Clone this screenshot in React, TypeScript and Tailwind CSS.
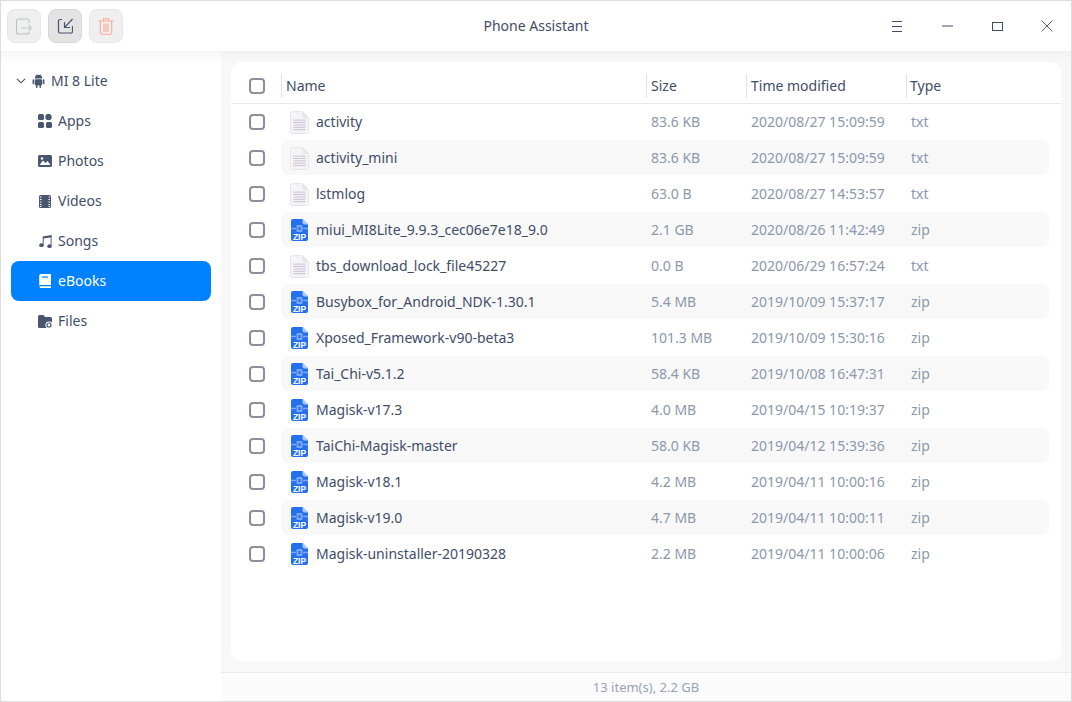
import React from "react";

const files: [string, string, string, string][] = [
  ["activity", "83.6 KB", "2020/08/27 15:09:59", "txt"],
  ["activity_mini", "83.6 KB", "2020/08/27 15:09:59", "txt"],
  ["lstmlog", "63.0 B", "2020/08/27 14:53:57", "txt"],
  ["miui_MI8Lite_9.9.3_cec06e7e18_9.0", "2.1 GB", "2020/08/26 11:42:49", "zip"],
  ["tbs_download_lock_file45227", "0.0 B", "2020/06/29 16:57:24", "txt"],
  ["Busybox_for_Android_NDK-1.30.1", "5.4 MB", "2019/10/09 15:37:17", "zip"],
  ["Xposed_Framework-v90-beta3", "101.3 MB", "2019/10/09 15:30:16", "zip"],
  ["Tai_Chi-v5.1.2", "58.4 KB", "2019/10/08 16:47:31", "zip"],
  ["Magisk-v17.3", "4.0 MB", "2019/04/15 10:19:37", "zip"],
  ["TaiChi-Magisk-master", "58.0 KB", "2019/04/12 15:39:36", "zip"],
  ["Magisk-v18.1", "4.2 MB", "2019/04/11 10:00:16", "zip"],
  ["Magisk-v19.0", "4.7 MB", "2019/04/11 10:00:11", "zip"],
  ["Magisk-uninstaller-20190328", "2.2 MB", "2019/04/11 10:00:06", "zip"],
];

function TxtIcon() {
  return (
    <svg width="19" height="23" viewBox="0 0 20 24" className="shrink-0">
      <path d="M2.5 0.5H13L19.5 7V21.5a2 2 0 0 1-2 2H2.5a2 2 0 0 1-2-2V2.5a2 2 0 0 1 2-2Z" fill="#f5f4f6" stroke="#e6e4e8" />
      <path d="M13 0.5L19.5 7H15a2 2 0 0 1-2-2Z" fill="#e6e4e8" />
      <path d="M3.5 9.5H16.5M3.5 12H16.5M3.5 14.5H16.5M3.5 17H16.5M3.5 19.5H16.5" stroke="#c4c0d2" strokeWidth="1" />
    </svg>
  );
}

function ZipIcon() {
  return (
    <svg width="17" height="22" viewBox="0 0 17 22" className="shrink-0 ml-[1px]">
      <path d="M2 0H11.5L17 5.5V20a2 2 0 0 1-2 2H2a2 2 0 0 1-2-2V2a2 2 0 0 1 2-2Z" fill="#2470ee" />
      <path d="M11.5 0L17 5.5H13.5a2 2 0 0 1-2-2Z" fill="#a9c8f8" />
      <path d="M0 9.5H5M12 9.5H17" stroke="#7ba7f3" strokeWidth="1.4" />
      <rect x="5.5" y="6" width="6" height="7" rx="1" fill="#7ba7f3" />
      <rect x="7.5" y="8" width="2" height="3" fill="#2470ee" />
      <text x="8.5" y="20.5" textAnchor="middle" fontSize="8.5" fontWeight="700" fill="#ffffff" fontFamily="'Liberation Sans', sans-serif">ZIP</text>
    </svg>
  );
}

function Check() {
  return <div className="w-[16px] h-[16px] rounded-[4px] border-2 border-[#8a8f9e] bg-white shrink-0" />;
}

const navIcons: Record<string, React.ReactNode> = {
  Apps: (
    <svg width="14" height="14" viewBox="0 0 14 14" fill="#4a5670">
      <rect x="0" y="0" width="6" height="6" rx="1.5" />
      <circle cx="10.5" cy="3" r="3.2" />
      <rect x="0" y="8" width="6" height="6" rx="1.5" />
      <rect x="8" y="8" width="6" height="6" rx="1.5" />
    </svg>
  ),
  Photos: (
    <svg width="14" height="12" viewBox="0 0 14 12">
      <rect width="14" height="12" rx="1.5" fill="#4a5670" />
      <path d="M1.5 10L5 5.5L7.5 8L9.5 6L12.5 10Z" fill="#fff" />
      <circle cx="4" cy="3.5" r="1.2" fill="#fff" />
    </svg>
  ),
  Videos: (
    <svg width="12" height="13" viewBox="0 0 12 13">
      <rect width="12" height="13" rx="1.5" fill="#4a5670" />
      <path d="M1 2H2.5M1 4.5H2.5M1 7H2.5M1 9.5H2.5M1 11.5H2.5M9.5 2H11M9.5 4.5H11M9.5 7H11M9.5 9.5H11M9.5 11.5H11" stroke="#fff" strokeWidth="1" />
    </svg>
  ),
  Songs: (
    <svg width="13" height="13" viewBox="0 0 14 14" fill="#4a5670">
      <path d="M4 1.5L13.5 0V2.5L5 3.8V11H4Z" />
      <path d="M12.5 1H13.5V11.5H12.5Z" />
      <ellipse cx="2.6" cy="11" rx="2.4" ry="2" />
      <ellipse cx="11.3" cy="12" rx="2.4" ry="2" />
    </svg>
  ),
  eBooks: (
    <svg width="12" height="14" viewBox="0 0 12 14" fill="#ffffff">
      <path d="M2 0H12V11H1.5A1.5 1.5 0 0 0 0.2 11.7V2A2 2 0 0 1 2 0Z" />
      <path d="M1.5 12.2H12V14H2A1.6 1.6 0 0 1 0.4 13 1 1 0 0 1 1.5 12.2Z" />
      <rect x="3" y="2.5" width="6" height="1.2" fill="#0081ff" />
    </svg>
  ),
  Files: (
    <svg width="14" height="13" viewBox="0 0 14 13">
      <path d="M1.5 0H5.5L7 2H12.5A1.5 1.5 0 0 1 14 3.5V11.5A1.5 1.5 0 0 1 12.5 13H1.5A1.5 1.5 0 0 1 0 11.5V1.5A1.5 1.5 0 0 1 1.5 0Z" fill="#4a5670" />
      <circle cx="11" cy="10" r="3.6" fill="#fff" />
      <circle cx="11" cy="10" r="2" fill="none" stroke="#4a5670" strokeWidth="1.2" />
    </svg>
  ),
};

function NavItem({ label, active }: { label: string; active?: boolean }) {
  return (
    <div className={`h-[40px] rounded-[8px] flex items-center pl-[27px] ${active ? "bg-[#0081ff] text-white" : "text-[#414d68]"}`}>
      <div className="w-[14px] flex justify-center mr-[6px]">{navIcons[label]}</div>
      <span>{label}</span>
    </div>
  );
}

function Tool({ children, active }: { children: React.ReactNode; active?: boolean }) {
  return (
    <div className={`w-[34px] h-[34px] rounded-[8px] flex items-center justify-center border ${active ? "bg-[#e3e3e3] border-[#d8d8d8]" : "bg-[#efefef] border-[#e6e6e6]"}`}>
      {children}
    </div>
  );
}

export default function App() {
  return (
    <div
      className="w-[1072px] h-[702px] bg-white border border-[#dcdcdc] flex flex-col overflow-hidden text-[14px] leading-[20px]"
      style={{ fontFamily: "'Noto Sans', sans-serif" }}
    >
      <header className="h-[50px] shrink-0 flex items-center pl-[6px] relative">
        <div className="flex gap-[7px]">
          <Tool>
            <svg width="18" height="18" viewBox="0 0 18 18" fill="none" stroke="#bcc0c9" strokeWidth="1.1">
              <path d="M14 5.5V4a2 2 0 0 0-2-2H3.5a2 2 0 0 0-2 2V15a2 2 0 0 0 2 2H12a2 2 0 0 0 2-2V14.5" />
              <path d="M6 11H16.5M13.5 8L16.5 11L13.5 14" stroke="#c6c9d0" />
            </svg>
          </Tool>
          <Tool active>
            <svg width="16" height="16" viewBox="0 0 16 16" fill="none" stroke="#4a5670" strokeWidth="1.2">
              <path d="M5 1.5H3A1.5 1.5 0 0 0 1.5 3V13.5A1.5 1.5 0 0 0 3 15H14A1.5 1.5 0 0 0 15.5 13.5V8" />
              <path d="M15.5 1L7.5 9.5M7.5 4V9.5H13" />
            </svg>
          </Tool>
          <Tool>
            <svg width="16" height="17" viewBox="0 0 16 17" fill="none" stroke="#f9a995" strokeWidth="1.1">
              <path d="M0.5 3H15.5M5.5 3V0.8H10.5V3M2.3 3V15A1.5 1.5 0 0 0 3.8 16.3H12.2A1.5 1.5 0 0 0 13.7 15V3" />
              <path d="M6 5.5V14M8 5.5V14M10 5.5V14" />
            </svg>
          </Tool>
        </div>
        <div className="absolute left-0 right-0 top-[15px] text-center text-[#414d68]">Phone Assistant</div>
        <div className="ml-auto flex items-center h-full">
          <svg width="11" height="11" viewBox="0 0 11 11" className="mr-[39px]" stroke="#414d68" strokeWidth="1">
            <path d="M0 0.5H10M0 5.5H10M0 10.5H10" />
          </svg>
          <svg width="11" height="2" viewBox="0 0 11 2" className="mr-[39px]" stroke="#414d68" strokeWidth="1">
            <path d="M0 1H11" />
          </svg>
          <svg width="11" height="9" viewBox="0 0 11 9" fill="none" className="mr-[38px]" stroke="#414d68" strokeWidth="1">
            <rect x="0.5" y="0.5" width="10" height="8" />
          </svg>
          <svg width="12" height="12" viewBox="0 0 12 12" className="mr-[18px]" stroke="#414d68" strokeWidth="0.9">
            <path d="M0.5 0.5L11.5 11.5M11.5 0.5L0.5 11.5" />
          </svg>
        </div>
      </header>

      <div className="flex-1 flex min-h-0">
        <aside className="w-[220px] shrink-0 px-[10px] bg-gradient-to-b from-[#f6f6f6] to-white to-[14px]">
          <div className="h-[60px] flex items-center text-[#414d68] pl-[5px]">
            <svg width="10" height="6" viewBox="0 0 10 6" fill="none" stroke="#414d68" strokeWidth="1.1" className="mr-[6px]">
              <path d="M1 0.8L5 4.8L9 0.8" />
            </svg>
            <svg width="13" height="14" viewBox="0 0 14 15" fill="#4a5670" className="mr-[6px]">
              <path d="M3 4.8A4 4 0 0 1 11 4.8Z" />
              <rect x="3" y="5.5" width="8" height="6.5" rx="0.8" />
              <rect x="0.6" y="5.5" width="1.7" height="5.5" rx="0.85" />
              <rect x="11.7" y="5.5" width="1.7" height="5.5" rx="0.85" />
              <rect x="4.3" y="11" width="1.7" height="4" rx="0.85" />
              <rect x="8" y="11" width="1.7" height="4" rx="0.85" />
              <path d="M4.5 0.2L6 2.2M9.5 0.2L8 2.2" stroke="#4a5670" strokeWidth="0.6" />
            </svg>
            <span>MI 8 Lite</span>
          </div>
          <nav className="-mt-[10px]">
            {["Apps", "Photos", "Videos", "Songs", "eBooks", "Files"].map((l) => (
              <NavItem key={l} label={l} active={l === "eBooks"} />
            ))}
          </nav>
        </aside>

        <main className="flex-1 min-w-0 flex flex-col bg-[#f8f8f8] bg-gradient-to-b from-[#f2f2f2] to-[#f8f8f8] to-[14px]">
          <div className="flex-1 min-h-0 pl-[10px] pr-[10px] pt-[11px] pb-[11px]">
            <div className="h-full bg-white rounded-[10px] flex flex-col">
              <div className="h-[42px] shrink-0 pt-[6px] flex items-center border-b border-[#e8e8e8] text-[#414d68] pr-[12px]">
                <div className="w-[50px] pl-[18px] shrink-0"><Check /></div>
                <div className="w-[365px] shrink-0 h-[24px] border-l border-[#e4e4e4] pl-[4px] flex items-center">Name</div>
                <div className="w-[100px] shrink-0 h-[24px] border-l border-[#e4e4e4] pl-[4px] flex items-center">Size</div>
                <div className="w-[160px] shrink-0 h-[24px] border-l border-[#e4e4e4] pl-[4px] flex items-center">Time modified</div>
                <div className="h-[24px] border-l border-[#e4e4e4] pl-[3px] flex items-center">Type</div>
              </div>
              <div>
                {files.map(([name, size, time, type], i) => (
                  <div key={name} className="h-[36px] flex items-center">
                    <div className="w-[50px] pl-[18px] shrink-0"><Check /></div>
                    <div className={`self-start h-[35px] pt-[1px] w-[768px] rounded-[8px] flex items-center ${i % 2 === 1 ? "bg-[#f8f8f8]" : ""}`}>
                      <div className="w-[365px] shrink-0 flex items-center text-[#414d68]">
                        <div className="w-[35px] pl-[9px] shrink-0 flex">{type === "txt" ? <TxtIcon /> : <ZipIcon />}</div>
                        <span>{name}</span>
                      </div>
                      <div className="w-[100px] shrink-0 pl-[5px] text-[#8c98ac]">{size}</div>
                      <div className="w-[160px] shrink-0 pl-[5px] text-[#8c98ac]">{time}</div>
                      <div className="pl-[5px] text-[#8c98ac]">{type}</div>
                    </div>
                  </div>
                ))}
              </div>
            </div>
          </div>
          <footer className="h-[29px] shrink-0 border-t border-[#ebebeb] bg-[#fbfbfb] text-center text-[13px] text-[#97a3b5] leading-[29px]">
            13 item(s), 2.2 GB
          </footer>
        </main>
      </div>
    </div>
  );
}
